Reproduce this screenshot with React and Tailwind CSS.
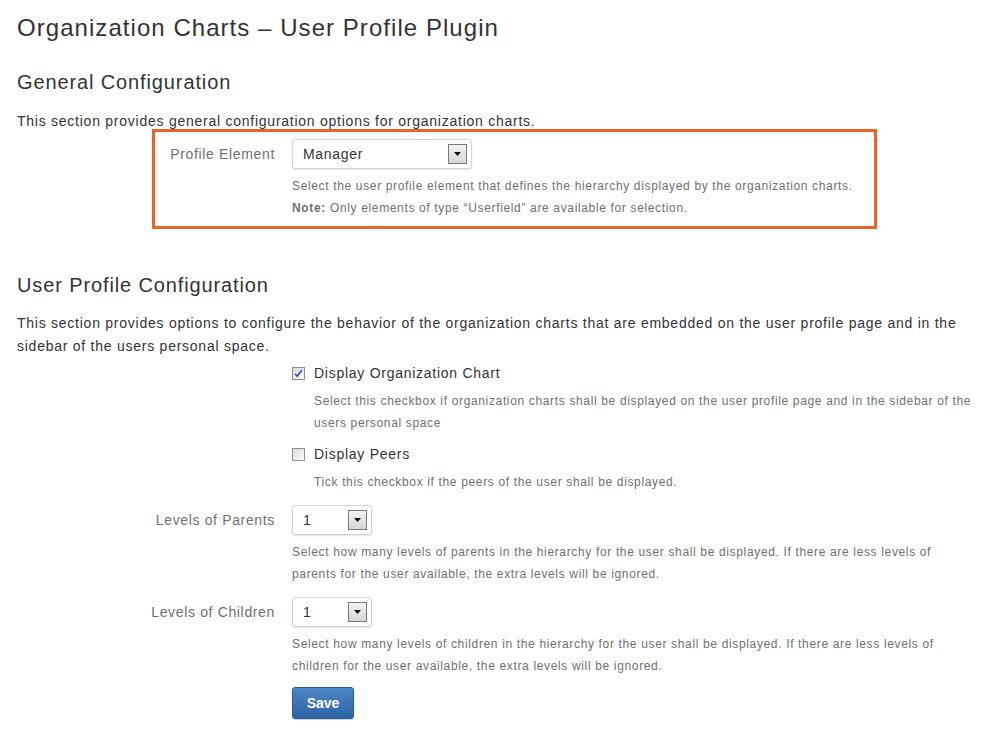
import { useState } from 'react';

// Small native-looking dropdown with a boxed arrow button on the right
function SelectBox({ value, width }) {
  return (
    <div
      className={`relative flex h-[30px] items-center rounded-[3px] border border-[#d4d4d4] bg-white pl-[10px] text-[14px] tracking-[0.7px] text-[#333] shadow-[0_1px_2px_rgba(0,0,0,0.12)] ${width}`}
    >
      <span>{value}</span>
      <span className="absolute right-[4px] top-[4px] flex h-[20px] w-[19px] items-center justify-center border border-[#7a7a7a] bg-gradient-to-b from-[#f4f4f4] to-[#d6d6d6]">
        <svg width="7" height="4" viewBox="0 0 7 4">
          <path d="M0 0h7L3.5 4z" fill="#111" />
        </svg>
      </span>
    </div>
  );
}

function Checkbox({ checked, onToggle }) {
  return (
    <span
      onClick={onToggle}
      className="flex h-[13px] w-[13px] shrink-0 cursor-pointer items-center justify-center border border-[#8f8f8f] bg-gradient-to-br from-[#dcdcdc] to-[#fafafa]"
    >
      {checked && (
        <svg width="9" height="9" viewBox="0 0 9 9">
          <path d="M1 4.8l2.2 2.4L8 1" fill="none" stroke="#2c4fa0" strokeWidth="1.6" />
        </svg>
      )}
    </span>
  );
}

function Hint({ children, className = '' }) {
  return (
    <p className={`whitespace-nowrap text-[12px] leading-[22px] tracking-[0.65px] text-[#707070] ${className}`}>
      {children}
    </p>
  );
}

export default function App() {
  const [showChart, setShowChart] = useState(true);
  const [showPeers, setShowPeers] = useState(false);

  return (
    <div className="min-h-screen bg-white px-[17px] font-['Liberation_Sans',Arial,sans-serif] text-[#333]">
      <h1 className="pt-[13px] text-[24px] leading-[30px] tracking-[1.05px]">
        Organization Charts – User Profile Plugin
      </h1>

      <h2 className="mt-[27px] text-[20px] leading-[24px] tracking-[0.88px]">General Configuration</h2>
      <p className="mt-[17px] text-[14px] leading-[20px] tracking-[0.75px]">
        This section provides general configuration options for organization charts.
      </p>

      {/* highlighted profile element group */}
      <div className="ml-[135px] mt-[-2px] w-[725px] border-[3px] border-[#e9642b] pt-[7px] pb-[7px]">
        <div className="flex">
          <label className="w-[120px] pt-[5px] text-right text-[14px] tracking-[0.65px] text-[#707070]">
            Profile Element
          </label>
          <div className="ml-[17px]">
            <SelectBox value="Manager" width="w-[180px]" />
          </div>
        </div>
        <Hint className="ml-[137px] mt-[6px]">
          Select the user profile element that defines the hierarchy displayed by the organization charts.
          <br />
          <span className="font-bold">Note:</span> Only elements of type “Userfield” are available for selection.
        </Hint>
      </div>

      <h2 className="mt-[44px] text-[20px] leading-[24px] tracking-[0.88px]">User Profile Configuration</h2>
      <p className="mt-[15px] whitespace-nowrap text-[14px] leading-[23px] tracking-[0.75px]">
        This section provides options to configure the behavior of the organization charts that are embedded on the user profile page and in the
        <br />
        sidebar of the users personal space.
      </p>

      <div className="ml-[275px]">
        <div className="mt-[5px] flex h-[20px] items-center gap-[9px]">
          <Checkbox checked={showChart} onToggle={() => setShowChart(!showChart)} />
          <span className="text-[14px] tracking-[0.73px]">Display Organization Chart</span>
        </div>
        <Hint className="ml-[22px] mt-[7px]">
          Select this checkbox if organization charts shall be displayed on the user profile page and in the sidebar of the
          <br />
          users personal space
        </Hint>

        <div className="mt-[10px] flex h-[20px] items-center gap-[9px]">
          <Checkbox checked={showPeers} onToggle={() => setShowPeers(!showPeers)} />
          <span className="text-[14px] tracking-[0.73px]">Display Peers</span>
        </div>
        <Hint className="ml-[22px] mt-[7px]">Tick this checkbox if the peers of the user shall be displayed.</Hint>
      </div>

      <div className="mt-[12px] flex">
        <label className="w-[258px] pt-[5px] text-right text-[14px] tracking-[0.65px] text-[#707070]">
          Levels of Parents
        </label>
        <div className="ml-[17px]">
          <SelectBox value="1" width="w-[80px]" />
        </div>
      </div>
      <Hint className="ml-[275px] mt-[6px]">
        Select how many levels of parents in the hierarchy for the user shall be displayed. If there are less levels of
        <br />
        parents for the user available, the extra levels will be ignored.
      </Hint>

      <div className="mt-[12px] flex">
        <label className="w-[258px] pt-[5px] text-right text-[14px] tracking-[0.65px] text-[#707070]">
          Levels of Children
        </label>
        <div className="ml-[17px]">
          <SelectBox value="1" width="w-[80px]" />
        </div>
      </div>
      <Hint className="ml-[275px] mt-[6px]">
        Select how many levels of children in the hierarchy for the user shall be displayed. If there are less levels of
        <br />
        children for the user available, the extra levels will be ignored.
      </Hint>

      <div className="ml-[275px] mt-[10px]">
        <button className="h-[32px] w-[62px] rounded-[3px] border border-[#2a5b94] bg-gradient-to-b from-[#4d88c8] to-[#2c62a3] text-[14px] font-bold text-white shadow-[0_1px_1px_rgba(0,0,0,0.2)]">
          Save
        </button>
      </div>
    </div>
  );
}
